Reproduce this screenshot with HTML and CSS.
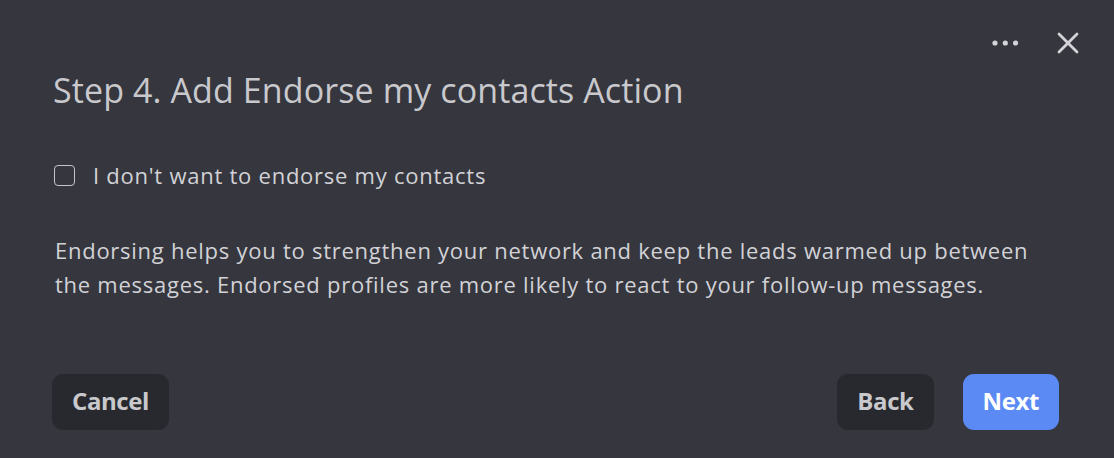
FILE: index.html
```html
<!DOCTYPE html>
<html>
<head>
<meta charset="utf-8">
<link rel="stylesheet" href="styles.css">
</head>
<body>
<div class="modal">
  <div class="top-actions">
    <button class="icon-btn dots" aria-label="More">
      <svg width="28" height="8" viewBox="0 0 28 8"><circle cx="4" cy="4" r="2.6" fill="#d4d4d8"/><circle cx="14.3" cy="4" r="2.6" fill="#d4d4d8"/><circle cx="24.6" cy="4" r="2.6" fill="#d4d4d8"/></svg>
    </button>
    <button class="icon-btn close" aria-label="Close">
      <svg width="22" height="22" viewBox="0 0 22 22"><path d="M2 2 L20 20 M20 2 L2 20" stroke="#d4d4d8" stroke-width="2.8" stroke-linecap="round"/></svg>
    </button>
  </div>
  <h1 class="title">Step 4. Add Endorse my contacts Action</h1>
  <label class="check-row">
    <span class="checkbox"></span>
    <span class="check-label">I don't want to endorse my contacts</span>
  </label>
  <p class="desc">Endorsing helps you to strengthen your network and keep the leads warmed up between the messages. Endorsed profiles are more likely to react to your follow-up messages.</p>
  <div class="footer">
    <button class="btn btn-dark">Cancel</button>
    <div class="right">
      <button class="btn btn-dark">Back</button>
      <button class="btn btn-primary">Next</button>
    </div>
  </div>
</div>
</body>
</html>
```
FILE: styles.css
```css
html, body {
  margin: 0;
  padding: 0;
  background: #35363e;
}
body {
  width: 1114px;
  height: 458px;
  overflow: hidden;
  font-family: "Open Sans", "Noto Sans", sans-serif;
  color: #d2d2d6;
}
.modal {
  position: relative;
  box-sizing: border-box;
  height: 458px;
  padding: 69px 55px 28px 52px;
  display: flex;
  flex-direction: column;
}
.top-actions {
  position: absolute;
  top: 32px;
  right: 35px;
  display: flex;
  align-items: center;
  gap: 38px;
}
.icon-btn {
  background: none;
  border: none;
  padding: 0;
  display: flex;
  cursor: pointer;
}
.title {
  margin: 0 0 0 1px;
  font-size: 34px;
  font-weight: 400;
  line-height: 42px;
  color: #c9c9cd;
  letter-spacing: 0.1px;
}
.check-row {
  display: flex;
  align-items: center;
  margin-top: 50px;
  margin-left: 2px;
}
.checkbox {
  width: 21px;
  height: 21px;
  border: 1.5px solid #c4c4c8;
  border-radius: 4px;
  box-sizing: border-box;
  margin-right: 18px;
}
.check-label {
  font-size: 22px;
  line-height: 28px;
  color: #d2d2d6;
  letter-spacing: 0.75px;
}
.desc {
  margin: 44px 0 0 3px;
  font-size: 22px;
  line-height: 34px;
  color: #d2d2d6;
  letter-spacing: 0.74px;
  max-width: 1000px;
}
.footer {
  margin-top: auto;
  display: flex;
  justify-content: space-between;
  align-items: center;
}
.right {
  display: flex;
  gap: 29px;
}
.btn {
  height: 56px;
  border: none;
  border-radius: 11px;
  font-family: inherit;
  font-size: 24px;
  font-weight: 700;
  letter-spacing: -0.4px;
  padding: 0 20px 3px;
  cursor: pointer;
}
.btn-dark {
  background: #28292e;
  color: #c9c9cd;
}
.btn-primary {
  background: #5b8af5;
  color: #ffffff;
}
```
